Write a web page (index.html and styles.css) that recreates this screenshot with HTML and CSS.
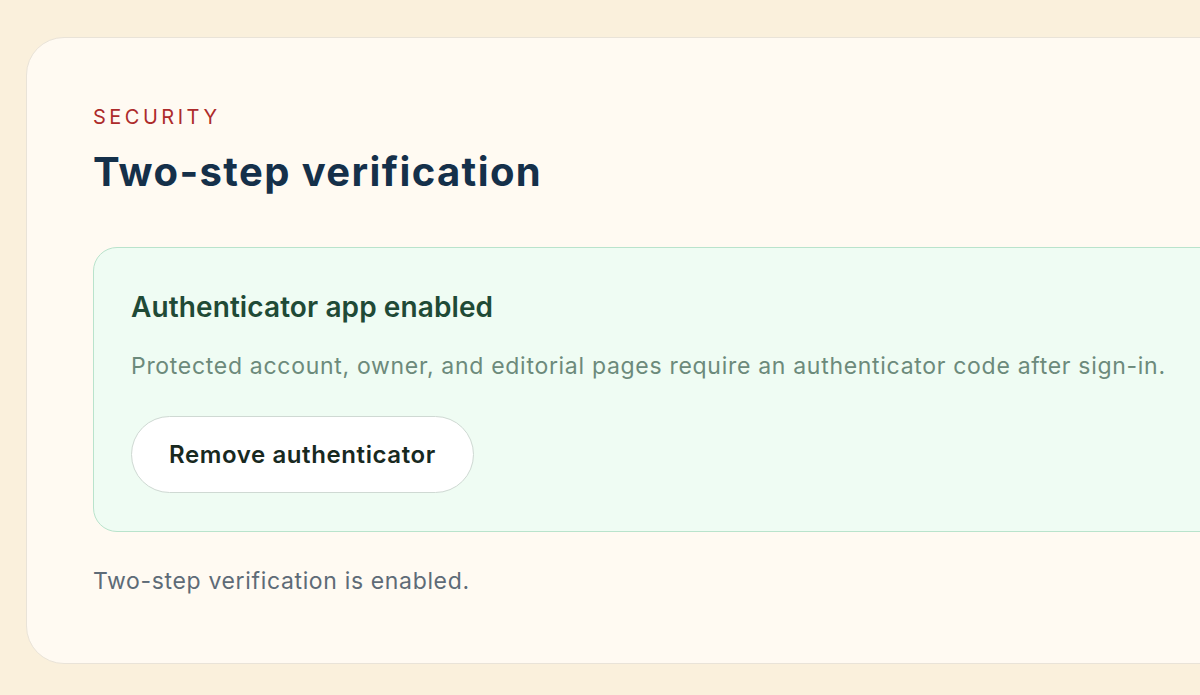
FILE: index.html
```html
<!DOCTYPE html>
<html lang="en">
<head>
    <meta charset="UTF-8">
    <meta name="viewport" content="width=device-width, initial-scale=1.0">
    <title>Two-step verification</title>
    <link rel="stylesheet" href="styles.css">
</head>
<body>
    <div class="page">
        <section class="security-card">
            <p class="eyebrow">Security</p>
            <h1 class="card-title">Two-step verification</h1>

            <div class="status-box">
                <h2 class="status-title">Authenticator app enabled</h2>
                <p class="status-text">Protected account, owner, and editorial pages require an authenticator code after sign-in.</p>
                <button class="btn-remove" type="button">Remove authenticator</button>
            </div>

            <p class="card-note">Two-step verification is enabled.</p>
        </section>
    </div>
</body>
</html>
```

FILE: styles.css
```css
/* Fond de page crème */
body {
    margin: 0;
    font-family: Inter, "Noto Sans", sans-serif;
    background: #faf0dc;
    overflow: hidden;
}

.page {
    padding: 37px 0 0 26px;
}

/* Carte principale */
.security-card {
    width: 1300px;
    box-sizing: border-box;
    background: #fffaf2;
    border: 1px solid #e9e3d8;
    border-radius: 38px;
    padding: 67px 66px 67px;
}

.eyebrow {
    margin: 0;
    font-size: 20px;
    line-height: 24px;
    letter-spacing: 3.5px;
    text-transform: uppercase;
    color: #ad2b2b;
}

.card-title {
    margin: 19px 0 0;
    font-size: 40px;
    line-height: 48px;
    font-weight: 700;
    color: #15304a;
    letter-spacing: 1.4px;
}

/* Encadré vert */
.status-box {
    margin-top: 51px;
    background: #effcf3;
    border: 1px solid #b9e3cc;
    border-radius: 24px;
    padding: 42px 37px 38px;
}

.status-title {
    margin: 0;
    font-size: 28px;
    line-height: 34px;
    font-weight: 600;
    color: #1f4a36;
    letter-spacing: 0.1px;
}

.status-text {
    margin: 27px 0 0;
    font-size: 23px;
    line-height: 30px;
    color: #6c8a7b;
    letter-spacing: 0.7px;
}

.btn-remove {
    display: block;
    margin-top: 35px;
    height: 77px;
    padding: 0 37px;
    font-family: inherit;
    font-size: 24px;
    font-weight: 600;
    color: #18291f;
    background: #ffffff;
    border: 1px solid #cfd9d3;
    border-radius: 40px;
    letter-spacing: 0.6px;
}

.card-note {
    margin: 34px 0 0;
    font-size: 23px;
    line-height: 30px;
    color: #5e6b77;
    letter-spacing: 0.65px;
}
```
